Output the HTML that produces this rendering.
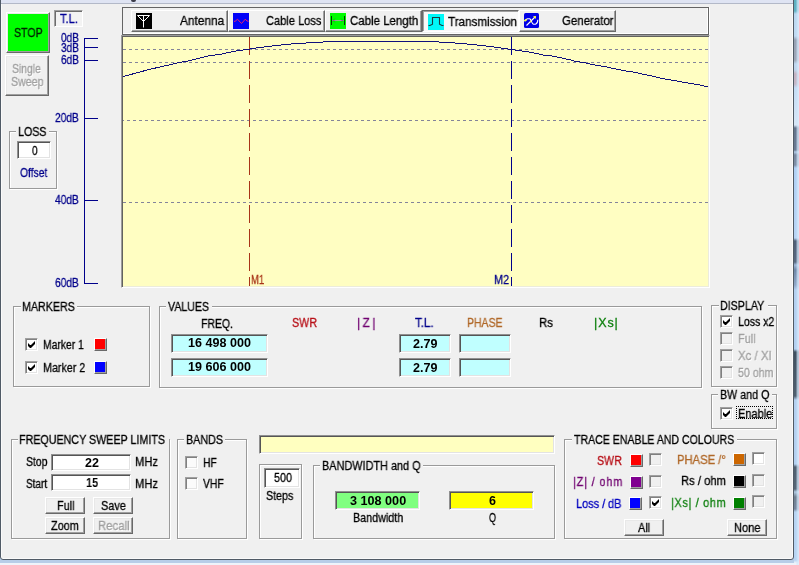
<!DOCTYPE html>
<html><head><meta charset="utf-8"><title>Transmission</title><style>
html,body{margin:0;padding:0}
body{width:799px;height:565px;overflow:hidden;background:#b7cde8;position:relative;font:12.5px/15px "Liberation Sans",sans-serif}
.ab{position:absolute;box-sizing:content-box}
.t{position:absolute;white-space:pre;will-change:transform;-webkit-text-stroke:0.3px;font:12.5px/15px "Liberation Sans",sans-serif;transform-origin:0 0}
.t.b{font-weight:bold;-webkit-text-stroke:0}
.t.dis{text-shadow:1px 1px 0 #fff}
.btn{box-sizing:border-box!important;border:1px solid;border-color:#fff #696969 #696969 #fff;box-shadow:inset -1px -1px 0 #a0a0a0,inset 1px 1px 0 #e8e8e8;background:#f0f0f0}
.btn2{box-sizing:border-box!important;border:1px solid;border-color:#fff #696969 #696969 #fff;box-shadow:inset -1px -1px 0 #a0a0a0;background:#f0f0f0}
.tbtn{box-sizing:border-box!important;border:1px solid;border-color:#fff #696969 #696969 #fff;box-shadow:inset -1px -1px 0 #a0a0a0;background:#f0f0f0}
.tbtn.pressed{border-color:#696969 #fff #fff #696969;box-shadow:inset 1px 1px 0 #a0a0a0;background:#f8f8f8}
.sunk{box-sizing:border-box!important;border:1px solid;border-color:#909090 #fff #fff #909090;box-shadow:inset 1px 1px 0 #555,inset -1px -1px 0 #e3e3e3}
.sunk1{box-sizing:border-box!important;border:1px solid;border-color:#a0a0a0 #fff #fff #a0a0a0;box-shadow:inset 1px 1px 0 #6c6c6c}
.grp{border:1px solid #9a9a9a;box-shadow:1px 1px 0 #fff,inset 1px 1px 0 #fff}
.chk{width:13px;height:13px;box-sizing:border-box!important;border:1px solid;border-color:#a0a0a0 #fff #fff #a0a0a0;box-shadow:inset 1px 1px 0 #808080,inset -1px -1px 0 #e3e3e3;padding:2px}
.chk svg{left:2px!important;top:2px!important}
.sw{width:13px;height:13px;box-sizing:border-box!important;border:1px solid;border-color:#fff #696969 #696969 #fff;box-shadow:inset -1px -1px 0 #a0a0a0}
.chart{border:1px solid;border-color:#9c9c9c #fff #fff #9c9c9c;padding:1px;box-shadow:inset 1px 1px 0 #62625e,inset -1px -1px 0 #ececdc;background:#fffec2;overflow:hidden}
#win{border:1px solid #505a66;border-radius:3px;box-shadow:inset 0 0 0 1px #fafafa;background:#f0f0f0}
#glassr{background:linear-gradient(90deg,rgba(0,0,0,0) 0,rgba(0,0,0,0) 2px,rgba(205,228,250,.65) 3px,rgba(225,238,252,.8) 5px),linear-gradient(180deg,#5fb0c0 0px,#62b2c4 11px,#bcd8f0 14px,#c0daf2 36px,#98a2b4 40px,#a0a8b8 60px,#c0d8f0 64px,#c0d4ea 70px,#c4b2c0 74px,#c4b8c8 84px,#c4dcf4 88px,#d8e6f6 125px,#64748c 128px,#6c7c94 150px,#b0c8e4 152px,#7888a0 155px,#8090a8 165px,#b0d0f4 168px,#b8d4f4 238px,#506078 241px,#5a6a82 262px,#a0b8d8 265px,#7088a8 270px,#90a8c8 285px,#b4d0f0 290px,#b4d0f0 349px,#405060 352px,#506070 396px,#b4d0f0 400px,#b4d0f0 464px,#506070 467px,#586878 489px,#b0c8e0 492px,#708090 497px,#7888a0 509px,#b8d4f2 512px,#b8d4f2 560px,#eef3fa 563px,#eef3fa 565px)}
</style></head><body>
<div class="ab" style="left:0;top:560px;width:799px;height:3px;background:#b7cde8"></div>
<div class="ab" style="left:0;top:563px;width:799px;height:2px;background:#eef3fa"></div>
<div class="ab" id="glassr" style="left:794px;top:0;width:5px;height:565px"></div>
<div class="ab" id="win" style="left:0;top:-6px;width:792px;height:564px"></div>
<div class="ab" style="left:1px;top:0;width:792px;height:3px;background:#dfe4f3"></div>
<div class="ab" style="left:1px;top:3px;width:792px;height:1px;background:#b3b9c8"></div>
<div class="ab" style="left:131px;top:0;width:5px;height:2px;background:#3a3a48;border-radius:0 0 3px 3px"></div>
<div class="ab btn" style="left:6px;top:12px;width:44px;height:41px;background:#00ff00"></div>
<div class="ab btn" style="left:5px;top:55px;width:44px;height:41px;"></div>
<div class="ab sunk1" style="left:54px;top:10px;width:29px;height:17px;background:#f3f3f3"></div>
<div class="ab" style="left:84px;top:38px;width:1px;height:246px;background:#00008b"></div>
<div class="ab" style="left:84px;top:38px;width:14px;height:1px;background:#00008b"></div>
<div class="ab" style="left:84px;top:47px;width:14px;height:1px;background:#00008b"></div>
<div class="ab" style="left:84px;top:60px;width:14px;height:1px;background:#00008b"></div>
<div class="ab" style="left:84px;top:118px;width:14px;height:1px;background:#00008b"></div>
<div class="ab" style="left:84px;top:200px;width:14px;height:1px;background:#00008b"></div>
<div class="ab" style="left:84px;top:283px;width:14px;height:1px;background:#00008b"></div>
<div class="ab grp" style="left:9px;top:131px;width:46px;height:56px"></div>
<div class="ab" style="left:16px;top:131px;width:33px;height:2px;background:#f0f0f0"></div>
<div class="ab sunk" style="left:17px;top:141px;width:34px;height:18px;background:#fff"></div>
<div class="ab" style="left:122px;top:7px;width:585px;height:26px;border:1px solid #646464;box-shadow:inset -1px -1px 0 #fff,1px 0 0 #fff"></div>
<div class="ab tbtn" style="left:131px;top:10px;width:97px;height:22px"><svg class="ab" style="left:4px;top:2px" width="16" height="16" viewBox="0 0 16 16"><rect width="16" height="16" fill="#000"/><path d="M1.5 2.5H13.5M7.5 2.5V14.5M1.5 2.5L7.5 8.5L13.5 2.5" stroke="#fff" stroke-width="1" fill="none"/></svg></div>
<div class="ab tbtn" style="left:228px;top:10px;width:97px;height:22px"><svg class="ab" style="left:4px;top:2px" width="16" height="16" viewBox="0 0 16 16"><rect width="16" height="16" fill="#0000f8"/><path d="M1 8.5L2.5 8L4.5 6.2L8.5 10.5L12.3 6.2L14 8L15.5 8.3" stroke="#e8206a" stroke-width="1" fill="none"/></svg></div>
<div class="ab tbtn" style="left:325px;top:10px;width:97px;height:22px"><svg class="ab" style="left:4px;top:2px" width="16" height="16" viewBox="0 0 16 16"><rect width="16" height="16" fill="#00fb00"/><path d="M1.5 3V12M14.5 3V12" stroke="#053a05" stroke-width="1"/><path d="M2 7.5H14" stroke="#8fb08f" stroke-width="1"/><path d="M3 7.5H5M11 7.5H13" stroke="#c040c0" stroke-width="1.2"/><path d="M5 5.5L3 7.5L5 9.5M11 5.5L13 7.5L11 9.5" stroke="#10b010" stroke-width="0.8" fill="none"/></svg></div>
<div class="ab tbtn pressed" style="left:422px;top:10px;width:97px;height:22px"><svg class="ab" style="left:5px;top:3px" width="16" height="16" viewBox="0 0 16 16"><rect width="16" height="16" fill="#00f8f8"/><path d="M0.5 11.5L2 11.5L4.5 10.2V3.5H11.5V10.2L14 11.5L15.5 11.5" stroke="#1c3c40" stroke-width="1.1" fill="none"/></svg></div>
<div class="ab tbtn" style="left:519px;top:10px;width:97px;height:22px"><svg class="ab" style="left:4px;top:2px" width="15" height="15" viewBox="0 0 15 15"><rect width="15" height="15" rx="1.5" fill="#0000e6"/><path d="M2.5 12.5L11 4" stroke="#fff" stroke-width="1.1"/><path d="M0.5 8L3.2 5.8H5.8C7.5 7 7.5 10.5 9.5 11.2H11.5C13.3 10.5 13.8 8.5 13.8 6.8" stroke="#fff" stroke-width="1.1" fill="none"/><path d="M9 3.2L12 3L11.8 6Z" fill="#ffff40"/><path d="M0.5 8L2.5 6.5M6 8.5L7.2 8.5" stroke="#ffff40" stroke-width="1.6"/></svg></div>
<div class="ab chart" style="left:121px;top:35px;width:585px;height:249px">
<svg class="ab" style="left:1px;top:1px" width="585" height="249" viewBox="0 0 585 249"><path d="M0 12.5H585" stroke="#84849a" stroke-width="1" stroke-dasharray="3 3"/><path d="M0 25.5H585" stroke="#84849a" stroke-width="1" stroke-dasharray="3 3"/><path d="M-2 83.5H585" stroke="#84849a" stroke-width="1" stroke-dasharray="3 3"/><path d="M0 165.5H585" stroke="#84849a" stroke-width="1" stroke-dasharray="3 3"/><path d="M126.5 0V249" stroke="#a83418" stroke-width="1" stroke-dasharray="18 6"/><path d="M388.5 0V249" stroke="#00008b" stroke-width="1" stroke-dasharray="18 6"/><path d="M-0.5 39.6 L9.5 37.0 L22.0 33.6 L34.5 30.5 L47.0 27.8 L55.8 25.5 L67.0 23.6 L77.0 21.1 L87.0 18.6 L98.0 17.4 L103.0 16.0 L110.0 14.5 L116.7 13.5 L123.5 12.5 L129.8 11.5 L136.3 10.5 L145.4 9.5 L153.2 8.5 L162.3 7.5 L173.9 6.5 L192.5 5.5 L206.0 4.6 L212.0 4.5 L307.0 4.5 L324.0 5.5 L339.0 6.5 L349.0 7.5 L359.0 8.5 L366.4 9.5 L374.5 10.5 L381.4 11.5 L388.2 12.5 L395.0 13.4 L402.0 14.5 L409.0 15.5 L415.0 16.8 L422.0 18.4 L430.8 19.2 L440.8 21.5 L447.6 23.0 L453.2 24.5 L460.8 25.5 L468.2 27.4 L475.8 28.6 L483.2 29.9 L489.5 31.4 L494.5 32.4 L499.8 33.4 L506.0 34.5 L513.0 35.5 L519.0 37.0 L525.0 38.2 L532.6 39.9 L539.0 41.4 L544.0 42.4 L550.8 43.4 L556.4 44.5 L561.4 45.5 L567.6 46.4 L573.9 47.4 L579.0 48.4 L583.0 49.5 L585.5 49.9" stroke="#10107c" stroke-width="1" fill="none" shape-rendering="crispEdges"/></svg>
</div>
<div class="ab grp" style="left:13px;top:306px;width:135px;height:79px"></div>
<div class="ab" style="left:21px;top:306px;width:56px;height:2px;background:#f0f0f0"></div>
<div class="ab chk" style="left:25px;top:338px;background:#fff"><svg class="ab" style="left:1px;top:1px" width="7" height="7" viewBox="0 0 7 7"><path d="M0 2v3l2 2h1l4-4V0L3 4H2Z" fill="#000"/></svg></div>
<div class="ab sw" style="left:94px;top:338px;background:#ff0000"></div>
<div class="ab chk" style="left:25px;top:361px;background:#fff"><svg class="ab" style="left:1px;top:1px" width="7" height="7" viewBox="0 0 7 7"><path d="M0 2v3l2 2h1l4-4V0L3 4H2Z" fill="#000"/></svg></div>
<div class="ab sw" style="left:94px;top:361px;background:#0000ff"></div>
<div class="ab grp" style="left:159px;top:306px;width:541px;height:80px"></div>
<div class="ab" style="left:166px;top:306px;width:46px;height:2px;background:#f0f0f0"></div>
<div class="ab sunk" style="left:171px;top:334px;width:97px;height:19px;background:#c0ffff"></div>
<div class="ab sunk" style="left:399px;top:334px;width:52px;height:19px;background:#c0ffff"></div>
<div class="ab sunk" style="left:459px;top:334px;width:52px;height:19px;background:#c0ffff"></div>
<div class="ab sunk" style="left:171px;top:358px;width:97px;height:19px;background:#c0ffff"></div>
<div class="ab sunk" style="left:399px;top:358px;width:52px;height:19px;background:#c0ffff"></div>
<div class="ab sunk" style="left:459px;top:358px;width:52px;height:19px;background:#c0ffff"></div>
<div class="ab grp" style="left:711px;top:305px;width:64px;height:80px"></div>
<div class="ab" style="left:719px;top:305px;width:49px;height:2px;background:#f0f0f0"></div>
<div class="ab chk" style="left:720px;top:315px;background:#fff"><svg class="ab" style="left:1px;top:1px" width="7" height="7" viewBox="0 0 7 7"><path d="M0 2v3l2 2h1l4-4V0L3 4H2Z" fill="#000"/></svg></div>
<div class="ab chk" style="left:720px;top:332px;background:#f0f0f0"></div>
<div class="ab chk" style="left:720px;top:349px;background:#f0f0f0"></div>
<div class="ab chk" style="left:720px;top:366px;background:#f0f0f0"></div>
<div class="ab grp" style="left:711px;top:394px;width:64px;height:33px"></div>
<div class="ab" style="left:718px;top:394px;width:54px;height:2px;background:#f0f0f0"></div>
<div class="ab chk" style="left:720px;top:407px;background:#fff"><svg class="ab" style="left:1px;top:1px" width="7" height="7" viewBox="0 0 7 7"><path d="M0 2v3l2 2h1l4-4V0L3 4H2Z" fill="#000"/></svg></div>
<div class="ab" style="left:736px;top:406px;width:37px;height:13px;border:1px dotted #000;box-sizing:border-box"></div>
<div class="ab grp" style="left:11px;top:439px;width:157px;height:98px"></div>
<div class="ab" style="left:18px;top:439px;width:151px;height:2px;background:#f0f0f0"></div>
<div class="ab sunk" style="left:51px;top:454px;width:80px;height:17px;background:#fff"></div>
<div class="ab sunk" style="left:51px;top:474px;width:80px;height:17px;background:#fff"></div>
<div class="ab btn" style="left:45px;top:497px;width:40px;height:17px;"></div>
<div class="ab btn" style="left:93px;top:497px;width:40px;height:17px;"></div>
<div class="ab btn" style="left:45px;top:517px;width:40px;height:17px;"></div>
<div class="ab btn" style="left:93px;top:517px;width:40px;height:17px;"></div>
<div class="ab grp" style="left:177px;top:439px;width:68px;height:98px"></div>
<div class="ab" style="left:184px;top:439px;width:41px;height:2px;background:#f0f0f0"></div>
<div class="ab chk" style="left:185px;top:456px;background:#fbfbfb"></div>
<div class="ab chk" style="left:185px;top:477px;background:#fbfbfb"></div>
<div class="ab sunk" style="left:259px;top:435px;width:296px;height:19px;background:#ffffc0"></div>
<div class="ab grp" style="left:259px;top:464px;width:41px;height:73px"></div>
<div class="ab sunk" style="left:264px;top:468px;width:36px;height:20px;background:#fff"></div>
<div class="ab grp" style="left:313px;top:465px;width:240px;height:72px"></div>
<div class="ab" style="left:320px;top:465px;width:103px;height:2px;background:#f0f0f0"></div>
<div class="ab sunk" style="left:335px;top:491px;width:85px;height:19px;background:#80ff80"></div>
<div class="ab sunk" style="left:449px;top:491px;width:85px;height:19px;background:#ffff00"></div>
<div class="ab grp" style="left:564px;top:439px;width:211px;height:98px"></div>
<div class="ab" style="left:572px;top:439px;width:165px;height:2px;background:#f0f0f0"></div>
<div class="ab sw" style="left:630px;top:454px;background:#ff0000"></div>
<div class="ab chk" style="left:649px;top:453px;background:#f0f0f0"></div>
<div class="ab sw" style="left:630px;top:476px;background:#800090"></div>
<div class="ab chk" style="left:649px;top:475px;background:#f0f0f0"></div>
<div class="ab sw" style="left:629px;top:497px;background:#0000ff"></div>
<div class="ab chk" style="left:649px;top:496px;background:#fff"><svg class="ab" style="left:1px;top:1px" width="7" height="7" viewBox="0 0 7 7"><path d="M0 2v3l2 2h1l4-4V0L3 4H2Z" fill="#000"/></svg></div>
<div class="ab sw" style="left:733px;top:453px;background:#cc6600"></div>
<div class="ab chk" style="left:752px;top:452px;background:#fff"></div>
<div class="ab sw" style="left:733px;top:475px;background:#000"></div>
<div class="ab chk" style="left:752px;top:474px;background:#f0f0f0"></div>
<div class="ab sw" style="left:733px;top:497px;background:#008000"></div>
<div class="ab chk" style="left:752px;top:495px;background:#f0f0f0"></div>
<div class="ab btn" style="left:624px;top:519px;width:40px;height:17px;"></div>
<div class="ab btn" style="left:727px;top:519px;width:40px;height:17px;"></div>
<span class="t" style="left:13.60px;top:26px;color:#002000;transform:scaleX(0.849);">STOP</span>
<span class="t dis" style="left:12.40px;top:62px;color:#a0a0a0;transform:scaleX(0.833);">Single</span>
<span class="t dis" style="left:10.60px;top:75px;color:#a0a0a0;transform:scaleX(0.852);">Sweep</span>
<span class="t" style="left:60.00px;top:12px;color:#000098;transform:scaleX(0.884);">T.L.</span>
<span class="t" style="left:60.70px;top:31px;color:#00008b;transform:scaleX(0.799);">0dB</span>
<span class="t" style="left:60.70px;top:41px;color:#00008b;transform:scaleX(0.799);">3dB</span>
<span class="t" style="left:60.70px;top:53px;color:#00008b;transform:scaleX(0.799);">6dB</span>
<span class="t" style="left:54.70px;top:111px;color:#00008b;transform:scaleX(0.814);">20dB</span>
<span class="t" style="left:54.70px;top:193px;color:#00008b;transform:scaleX(0.814);">40dB</span>
<span class="t" style="left:54.70px;top:276px;color:#00008b;transform:scaleX(0.814);">60dB</span>
<span class="t" style="left:17.65px;top:125px;color:#000;transform:scaleX(0.853);">LOSS</span>
<span class="t" style="left:31.80px;top:144px;color:#000;transform:scaleX(0.800);">0</span>
<span class="t" style="left:20.40px;top:166px;color:#00008b;transform:scaleX(0.823);">Offset</span>
<span class="t" style="left:180.30px;top:14px;color:#000;transform:scaleX(0.950);">Antenna</span>
<span class="t" style="left:266.40px;top:14px;color:#000;transform:scaleX(0.886);">Cable Loss</span>
<span class="t" style="left:349.80px;top:14px;color:#000;transform:scaleX(0.917);">Cable Length</span>
<span class="t" style="left:447.50px;top:15px;color:#000;transform:scaleX(0.932);">Transmission</span>
<span class="t" style="left:561.60px;top:14px;color:#000;transform:scaleX(0.916);">Generator</span>
<span class="t" style="left:251.24px;top:273px;color:#a83418;transform:scaleX(0.756);">M1</span>
<span class="t" style="left:493.93px;top:273px;color:#00008b;transform:scaleX(0.865);">M2</span>
<span class="t" style="left:21.85px;top:300px;color:#000;transform:scaleX(0.855);">MARKERS</span>
<span class="t" style="left:43.07px;top:338px;color:#000;transform:scaleX(0.829);">Marker 1</span>
<span class="t" style="left:43.04px;top:361px;color:#000;transform:scaleX(0.858);">Marker 2</span>
<span class="t" style="left:168.30px;top:300px;color:#000;transform:scaleX(0.847);">VALUES</span>
<span class="t" style="left:200.96px;top:317px;color:#000;transform:scaleX(0.836);">FREQ.</span>
<span class="t" style="left:291.60px;top:316px;color:#b81018;transform:scaleX(0.858);">SWR</span>
<span class="t" style="left:356.67px;top:316px;color:#700070;transform:scaleX(0.931);letter-spacing:2.8px;">|Z|</span>
<span class="t" style="left:414.90px;top:316px;color:#00008b;transform:scaleX(0.920);">T.L.</span>
<span class="t" style="left:466.76px;top:316px;color:#b06828;transform:scaleX(0.838);">PHASE</span>
<span class="t" style="left:538.59px;top:316px;color:#000;transform:scaleX(0.913);">Rs</span>
<span class="t" style="left:593.81px;top:316px;color:#108010;transform:scaleX(0.990);letter-spacing:0.9px;">|Xs|</span>
<span class="t b" style="left:188.30px;top:336px;color:#000;transform:scaleX(1.005);">16 498 000</span>
<span class="t b" style="left:412.70px;top:337px;color:#000;transform:scaleX(1.005);">2.79</span>
<span class="t b" style="left:188.30px;top:360px;color:#000;transform:scaleX(1.005);">19 606 000</span>
<span class="t b" style="left:412.70px;top:361px;color:#000;transform:scaleX(1.005);">2.79</span>
<span class="t" style="left:720.15px;top:299px;color:#000;transform:scaleX(0.852);">DISPLAY</span>
<span class="t" style="left:737.56px;top:315px;color:#000;transform:scaleX(0.840);">Loss x2</span>
<span class="t dis" style="left:737.52px;top:332px;color:#a0a0a0;transform:scaleX(0.877);">Full</span>
<span class="t dis" style="left:738.40px;top:349px;color:#a0a0a0;transform:scaleX(0.919);">Xc / XI</span>
<span class="t dis" style="left:738.40px;top:366px;color:#a0a0a0;transform:scaleX(0.850);">50 ohm</span>
<span class="t" style="left:719.64px;top:388px;color:#000;transform:scaleX(0.857);">BW and Q</span>
<span class="t" style="left:737.52px;top:407px;color:#000;transform:scaleX(0.880);">Enable</span>
<span class="t" style="left:19.44px;top:433px;color:#000;transform:scaleX(0.857);">FREQUENCY SWEEP LIMITS</span>
<span class="t" style="left:25.50px;top:455px;color:#000;transform:scaleX(0.835);">Stop</span>
<span class="t" style="left:25.50px;top:477px;color:#000;transform:scaleX(0.799);">Start</span>
<span class="t b" style="left:84.75px;top:456px;color:#000;transform:scaleX(0.982);">22</span>
<span class="t b" style="left:85.70px;top:476px;color:#000;transform:scaleX(0.874);">15</span>
<span class="t" style="left:135.41px;top:455px;color:#000;transform:scaleX(0.892);">MHz</span>
<span class="t" style="left:135.41px;top:477px;color:#000;transform:scaleX(0.892);">MHz</span>
<span class="t" style="left:56.63px;top:499px;color:#000;transform:scaleX(0.871);">Full</span>
<span class="t" style="left:100.60px;top:499px;color:#000;transform:scaleX(0.876);">Save</span>
<span class="t" style="left:50.60px;top:519px;color:#000;transform:scaleX(0.872);">Zoom</span>
<span class="t dis" style="left:97.89px;top:519px;color:#a0a0a0;transform:scaleX(0.910);">Recall</span>
<span class="t" style="left:185.54px;top:433px;color:#000;transform:scaleX(0.860);">BANDS</span>
<span class="t" style="left:202.77px;top:456px;color:#000;transform:scaleX(0.830);">HF</span>
<span class="t" style="left:203.10px;top:477px;color:#000;transform:scaleX(0.832);">VHF</span>
<span class="t" style="left:273.60px;top:471px;color:#000;transform:scaleX(0.861);">500</span>
<span class="t" style="left:266.40px;top:489px;color:#000;transform:scaleX(0.855);">Steps</span>
<span class="t" style="left:321.63px;top:459px;color:#000;transform:scaleX(0.871);">BANDWIDTH and Q</span>
<span class="t b" style="left:350.00px;top:494px;color:#000;transform:scaleX(1.010);">3 108 000</span>
<span class="t" style="left:352.94px;top:511px;color:#000;transform:scaleX(0.860);">Bandwidth</span>
<span class="t b" style="left:488.60px;top:494px;color:#000;transform:scaleX(0.943);">6</span>
<span class="t" style="left:489.00px;top:511px;color:#000;transform:scaleX(0.720);">Q</span>
<span class="t" style="left:573.80px;top:433px;color:#000;transform:scaleX(0.845);">TRACE ENABLE AND COLOURS</span>
<span class="t" style="left:596.60px;top:454px;color:#b81018;transform:scaleX(0.851);">SWR</span>
<span class="t" style="left:573.33px;top:475px;color:#700070;transform:scaleX(0.866);letter-spacing:1px;">|Z| / ohm</span>
<span class="t" style="left:575.83px;top:497px;color:#0000c0;transform:scaleX(0.872);">Loss / dB</span>
<span class="t" style="left:676.70px;top:453px;color:#b06828;transform:scaleX(0.900);">PHASE /°</span>
<span class="t" style="left:680.80px;top:474px;color:#000;transform:scaleX(0.899);">Rs / ohm</span>
<span class="t" style="left:671.23px;top:496px;color:#108010;transform:scaleX(0.868);letter-spacing:0.8px;">|Xs| / ohm</span>
<span class="t" style="left:637.90px;top:521px;color:#000;transform:scaleX(0.877);">All</span>
<span class="t" style="left:733.72px;top:521px;color:#000;transform:scaleX(0.885);">None</span>
</body></html>
